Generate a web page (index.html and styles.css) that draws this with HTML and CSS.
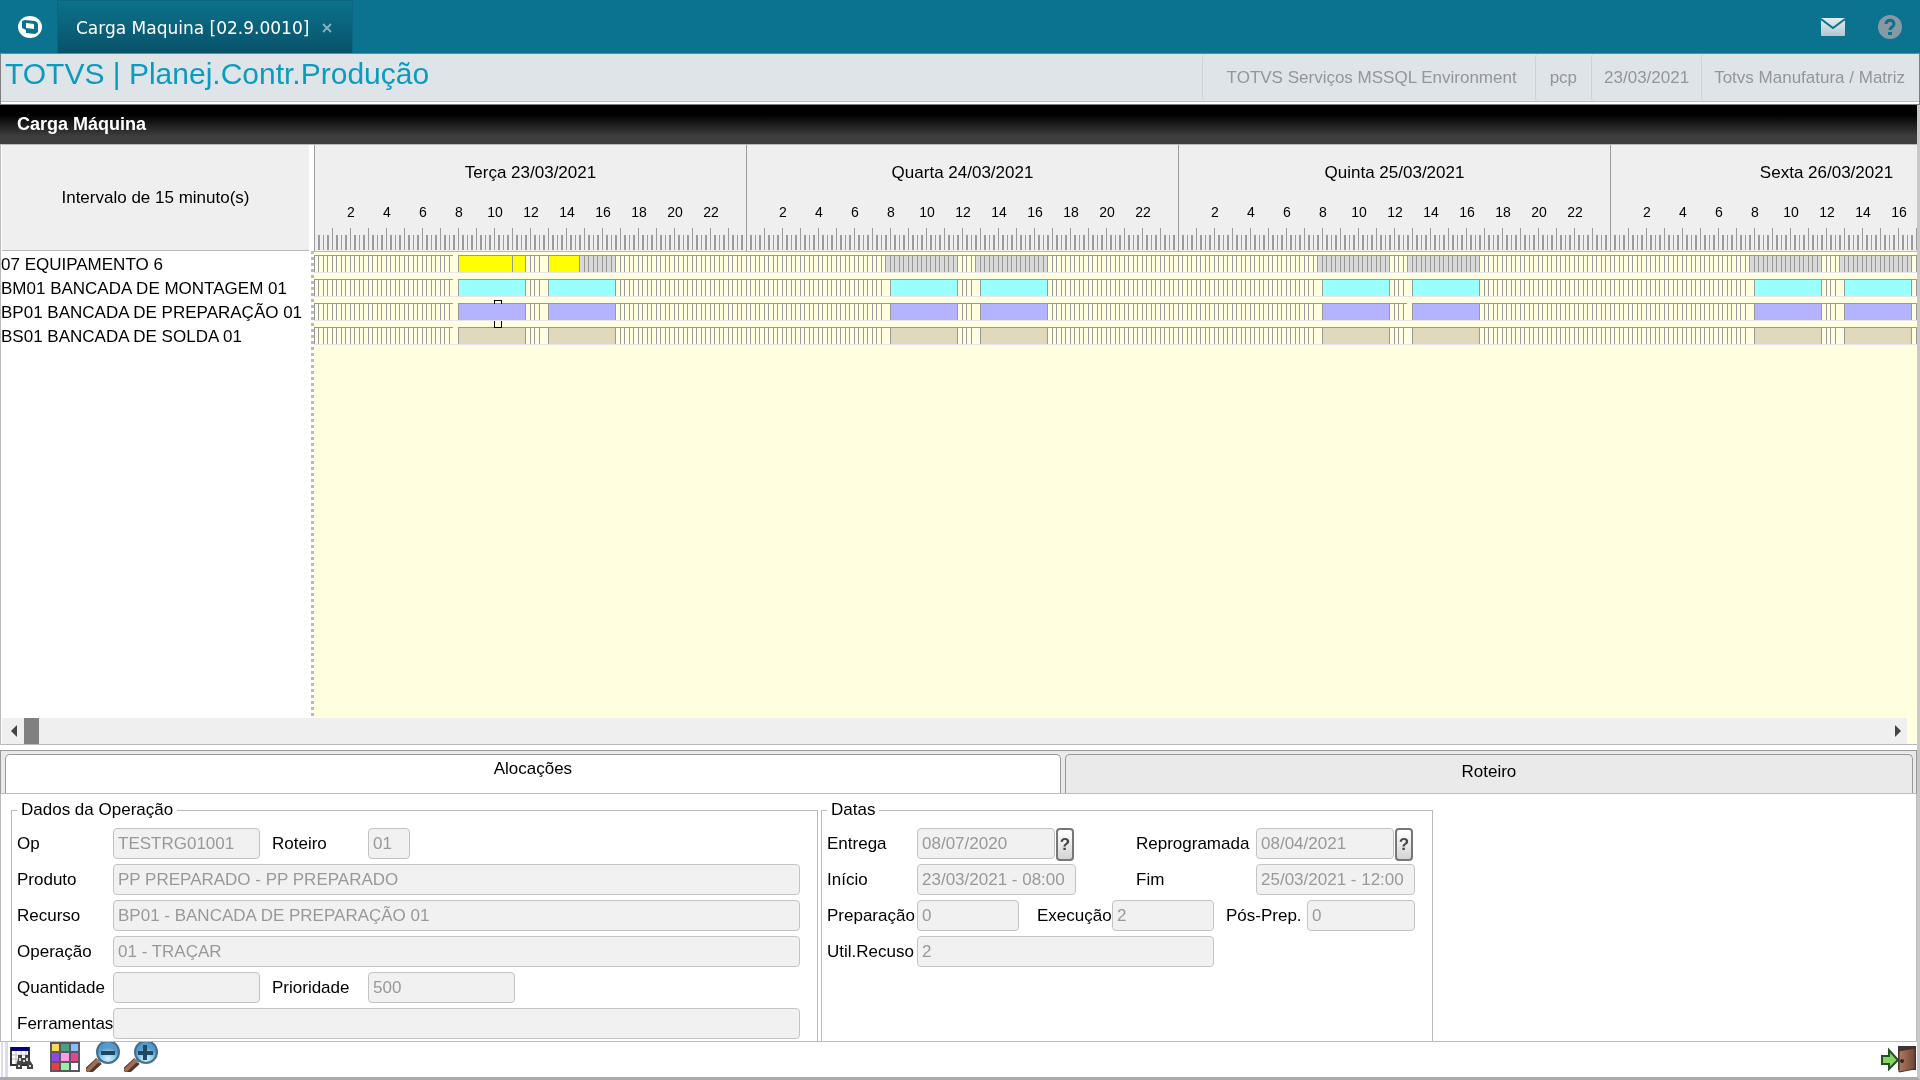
FILE: index.html
```html
<!DOCTYPE html>
<html lang="pt-BR">
<head>
  <meta charset="UTF-8" />
  <meta name="viewport" content="width=device-width, initial-scale=1" />
  <title>Carga Maquina</title>
  <link rel="stylesheet" href="styles.css">
</head>
<body>
  <!-- Barra superior -->
  <header class="topbar">
    <svg class="logo" viewBox="0 0 24 22" width="24" height="22">
      <ellipse cx="12" cy="11" rx="12" ry="11" fill="#fff"/>
      <path d="M4 5 L7 4 L17 5 Q20 6 20 9 L20 16 L17 18 L8 17 L8 14 L4 12 Z" fill="#0b728f"/>
      <path d="M8 7 L16 8 L16 13 L8 12 Z" fill="#fff"/>
    </svg>
    <div class="window-tab">
      <span>Carga Maquina [02.9.0010]</span>
      <button class="close" aria-label="Fechar">
        <svg viewBox="0 0 10 10" width="10" height="10"><path d="M1 1 L9 9 M9 1 L1 9" stroke="#7fb0bf" stroke-width="2"/></svg>
      </button>
    </div>
    <div class="top-icons">
      <button aria-label="Mensagens">
        <svg viewBox="0 0 24 18" width="24" height="18">
          <defs><linearGradient id="mail" x2="0" y2="1"><stop stop-color="#e4ecef"/><stop offset="1" stop-color="#b4c8d0"/></linearGradient></defs>
          <rect width="24" height="18" rx="1" fill="url(#mail)"/>
          <path d="M0 1 L12 10 L24 1" fill="none" stroke="#0b728f" stroke-width="2"/>
        </svg>
      </button>
      <button aria-label="Ajuda">
        <svg viewBox="0 0 24 24" width="24" height="24">
          <circle cx="12" cy="12" r="12" fill="#8799a5"/>
          <path d="M8 9 C8 4 16 4 16 9 C16 12 12 12 12 15" fill="none" stroke="#0b728f" stroke-width="3"/>
          <rect x="10" y="17" width="4" height="3" fill="#0b728f"/>
        </svg>
      </button>
    </div>
  </header>

  <div class="infobar">
    <h1>TOTVS | Planej.Contr.Produção</h1>
    <span class="info env">TOTVS Serviços MSSQL Environment</span>
    <span class="info user">pcp</span>
    <span class="info date">23/03/2021</span>
    <span class="info branch">Totvs Manufatura / Matriz</span>
  </div>

  <div class="window">
    <h2>Carga Máquina</h2>

    <!-- Gráfico de carga -->
    <section class="gantt">
      <div class="gantt-body">
        <div class="resources">
          <div class="interval">Intervalo de 15 minuto(s)</div>
          <ul id="resourceList"></ul>
        </div>
        <div class="timeline">
          <div class="scale" id="scale"></div>
          <div class="rows" id="rows"></div>
        </div>
      </div>
      <div class="scrollbar">
        <button aria-label="Anterior"><svg viewBox="0 0 6 12" width="6" height="12"><path d="M6 0 L0 6 L6 12 Z" fill="#444"/></svg></button>
        <div class="thumb"></div>
        <button class="next" aria-label="Próximo"><svg viewBox="0 0 6 12" width="6" height="12"><path d="M0 0 L6 6 L0 12 Z" fill="#444"/></svg></button>
      </div>
    </section>

    <!-- Abas -->
    <nav class="tabs">
      <button class="tab active">Alocações</button>
      <button class="tab">Roteiro</button>
    </nav>

    <form class="panel">
      <fieldset class="operation">
        <legend>Dados da Operação</legend>
        <div class="row">
          <label for="op">Op</label><input class="medium" id="op" value="TESTRG01001" disabled>
          <label class="second" for="roteiro">Roteiro</label><input class="tiny" id="roteiro" value="01" disabled>
        </div>
        <div class="row"><label for="produto">Produto</label><input class="full" id="produto" value="PP PREPARADO - PP PREPARADO" disabled></div>
        <div class="row"><label for="recurso">Recurso</label><input class="full" id="recurso" value="BP01 - BANCADA DE PREPARAÇÃO 01" disabled></div>
        <div class="row"><label for="operacao">Operação</label><input class="full" id="operacao" value="01 - TRAÇAR" disabled></div>
        <div class="row">
          <label for="quantidade">Quantidade</label><input class="medium" id="quantidade" disabled>
          <label class="second" for="prioridade">Prioridade</label><input class="medium" id="prioridade" value="500" disabled>
        </div>
        <div class="row"><label for="ferramentas">Ferramentas</label><input class="full" id="ferramentas" disabled></div>
      </fieldset>

      <fieldset class="dates">
        <legend>Datas</legend>
        <div class="row pair">
          <label for="entrega">Entrega</label>
          <div class="lookup"><input id="entrega" value="08/07/2020" disabled><button type="button">?</button></div>
          <label for="reprogramada">Reprogramada</label>
          <div class="lookup"><input id="reprogramada" value="08/04/2021" disabled><button type="button">?</button></div>
        </div>
        <div class="row pair">
          <label for="inicio">Início</label><input id="inicio" value="23/03/2021 - 08:00" disabled>
          <label for="fim">Fim</label><input id="fim" value="25/03/2021 - 12:00" disabled>
        </div>
        <div class="row triple">
          <label for="preparacao">Preparação</label><input id="preparacao" value="0" disabled>
          <label for="execucao">Execução</label><input id="execucao" value="2" disabled>
          <label for="posprep">Pós-Prep.</label><input id="posprep" value="0" disabled>
        </div>
        <div class="row single"><label for="util">Util.Recuso</label><input id="util" value="2" disabled></div>
      </fieldset>
    </form>

    <!-- Barra de ferramentas -->
    <footer class="toolbar">
      <button aria-label="Pesquisar">
        <svg viewBox="0 0 24 32" width="24" height="32">
          <rect x="2" y="6" width="18" height="17" fill="#fff" stroke="#333" stroke-width="2"/>
          <rect x="2" y="5" width="18" height="4" fill="#00007b"/>
          <path d="M7 9 V22 M12 9 V22 M17 9 V22 M3 13 H19 M3 17 H19" stroke="#bbb"/>
          <path d="M9 13 h4 v3 h3 v-3 h4 v4 l4 6 v4 h-6 v-5 h-5 v5 h-6 v-4 l2 -6 Z" fill="#444"/>
          <path d="M11 16 v3 M18 16 v3 M9 24 h2 M20 24 h2 M15 18 v2" stroke="#ddd" stroke-width="2"/>
        </svg>
      </button>
      <button class="palette" aria-label="Legenda de cores">
        <svg viewBox="0 0 30 32" width="30" height="32">
          <rect width="30" height="30" fill="#5c5562"/>
          <path d="M2 2h7v7H2z" fill="#f6db56"/><path d="M11 2h8v7h-8z" fill="#46a27f"/><path d="M21 2h7v7h-7z" fill="#83bfff"/>
          <path d="M2 11h7v8H2z" fill="#8f49df"/><path d="M11 11h8v8h-8z" fill="#ff9be0"/><path d="M21 11h7v8h-7z" fill="#e2478b"/>
          <path d="M2 21h7v7H2z" fill="#e44242"/><path d="M11 21h8v7h-8z" fill="#93f2a3"/><path d="M21 21h7v7h-7z" fill="#fff"/>
        </svg>
      </button>
      <button class="zoom" aria-label="Diminuir zoom">
        <svg viewBox="0 0 36 30" width="36" height="30">
          <defs><radialGradient id="lens" cy=".8"><stop stop-color="#d3f1ff"/><stop offset=".6" stop-color="#8fcbea"/><stop offset="1" stop-color="#5799c9"/></radialGradient></defs>
          <path d="M1 30 L13 19" stroke="#54362b" stroke-width="8"/>
          <path d="M1 29 L12 18" stroke="#a06c4f" stroke-width="4"/>
          <path d="M12 20 L16 16" stroke="#888" stroke-width="4"/>
          <circle cx="22" cy="10" r="11" fill="url(#lens)" stroke="#44708f" stroke-width="2"/>
          <path d="M15 11 H29" stroke="#1d4962" stroke-width="4"/>
        </svg>
      </button>
      <button class="zoom" aria-label="Aumentar zoom">
        <svg viewBox="0 0 36 30" width="36" height="30">
          <path d="M1 30 L13 19" stroke="#54362b" stroke-width="8"/>
          <path d="M1 29 L12 18" stroke="#a06c4f" stroke-width="4"/>
          <path d="M12 20 L16 16" stroke="#888" stroke-width="4"/>
          <circle cx="22" cy="10" r="11" fill="url(#lens)" stroke="#44708f" stroke-width="2"/>
          <path d="M14 11 H29 M21 3 V18" stroke="#1d4962" stroke-width="4"/>
        </svg>
      </button>
      <button class="exit" aria-label="Sair">
        <svg viewBox="0 0 36 30" width="36" height="30">
          <defs><linearGradient id="door"><stop stop-color="#ad7a62"/><stop offset="1" stop-color="#704636"/></linearGradient></defs>
          <path d="M17 2 H35 V26 H17 Z" fill="#3a3634"/>
          <path d="M18 7 L34 4 V25 L18 28 Z" fill="url(#door)" stroke="#4b3027"/>
          <path d="M1 12 H8 V6 L17 16 L8 25 V20 H1 Z" fill="#87d45c" stroke="#24502b" stroke-width="2"/>
          <circle cx="21" cy="17" r="2" fill="#3d241a"/>
        </svg>
      </button>
    </footer>
  </div>

  <script>
    const dias = [
      { nome: 'Terça 23/03/2021', ultimaHora: 22 },
      { nome: 'Quarta 24/03/2021', ultimaHora: 22 },
      { nome: 'Quinta 25/03/2021', ultimaHora: 22 },
      { nome: 'Sexta 26/03/2021', ultimaHora: 16 }
    ];

    // cada trecho: [hora inicial, hora final, tipo]
    const livre = [[7.75, 11.75, 'livre'], [12.75, 16.75, 'livre']];
    const turno = (tipo) => [[7.75, 8, 'vazio'], [8, 11.75, tipo], [12.75, 13, 'vazio'], [13, 16.75, tipo]];

    const recursos = [
      {
        nome: '07 EQUIPAMENTO 6',
        dias: [
          [[7.75, 8, 'vazio'], [8, 11, 'amarelo'], [11, 11.75, 'amarelo'], [12.75, 13, 'vazio'], [13, 14.75, 'amarelo'], [14.75, 16.75, 'livre']],
          livre, livre, livre
        ]
      },
      { nome: 'BM01 BANCADA DE MONTAGEM 01', tipo: 'ciano' },
      { nome: 'BP01 BANCADA DE PREPARAÇÃO 01', tipo: 'lilas', marcado: true },
      { nome: 'BS01 BANCADA DE SOLDA 01', tipo: 'bege' }
    ];

    const px = (hora) => Math.floor(hora * 18);

    function novo(classe, pai, texto) {
      const el = document.createElement('div');
      el.className = classe;
      if (texto) el.textContent = texto;
      pai.appendChild(el);
      return el;
    }

    const scale = document.getElementById('scale');
    dias.forEach((dia) => {
      const d = novo('scale-day', scale);
      novo('day-name', d, dia.nome);
      const horas = novo('hours', d);
      for (let h = 2; h <= dia.ultimaHora; h += 2) {
        novo('hour', horas, String(h));
      }
      novo('ticks', d);
    });

    const lista = document.getElementById('resourceList');
    const rows = document.getElementById('rows');
    recursos.forEach((r) => {
      const li = document.createElement('li');
      li.textContent = r.nome;
      lista.appendChild(li);

      const linha = novo('load', rows);
      dias.forEach((dia, i) => {
        const trechos = r.dias ? r.dias[i] : turno(r.tipo);
        const d = novo('load-day', linha);
        let fim = 0;
        trechos.forEach(([de, ate, tipo]) => {
          // interrompe também a borda da linha
          const corte = tipo === 'vazio' && ((i === 0 && de < 8) || (r.marcado && i === 2 && de > 12));
          const s = novo('seg ' + (corte ? 'corte' : tipo), d);
          s.style.marginLeft = px(de) - fim + 'px';
          s.style.width = px(ate) - px(de) + 'px';
          fim = px(ate);
        });
      });
      if (r.marcado) novo('marker', linha);
    });
  </script>
</body>
</html>
```
FILE: styles.css
```css
* {
  box-sizing: border-box;
}
body {
  margin: 0;
  height: 100vh;
  display: flex;
  flex-direction: column;
  overflow: hidden;
  background: #fff;
  color: #000;
  font-family: "Liberation Sans", Arial, sans-serif;
  font-size: 17px;
  line-height: 20px;
}
h1, h2, ul {
  margin: 0;
  padding: 0;
}
button {
  padding: 0;
  border: none;
  background: none;
  font: inherit;
  color: inherit;
}
svg {
  display: block;
}

/* Barra superior */
.topbar {
  flex: none;
  height: 53px;
  display: flex;
  align-items: center;
  padding: 0 18px;
  background: #0b728f;
}
.window-tab {
  height: 53px;
  display: flex;
  align-items: center;
  gap: 13px;
  margin-left: 15px;
  padding: 2px 20px 0 18px;
  border: 1px solid #0a677f;
  border-bottom: none;
  background: linear-gradient(#0b728b, #08526a);
  color: #fff;
  font-family: "DejaVu Sans", Verdana, sans-serif;
}
.top-icons {
  display: flex;
  align-items: center;
  gap: 33px;
  margin-left: auto;
}
.infobar {
  flex: none;
  height: 52px;
  display: flex;
  border: 1px solid #7f7f7f;
  background: linear-gradient(#dfe4e8 47px, #bbb 47px, #bbb 48px, #fff 48px);
}
.infobar h1 {
  flex: 1;
  padding-left: 4px;
  color: #0c9abe;
  font-size: 30px;
  font-weight: normal;
  line-height: 40px;
}
.info {
  height: 47px;
  padding: 0 12px;
  border-left: 1px solid #cdd2d5;
  border-radius: 4px;
  color: #93969a;
  line-height: 47px;
  white-space: nowrap;
}
.env {
  padding: 0 18px 0 24px;
}
.user {
  padding: 0 14px;
}
.branch {
  padding-right: 14px;
}

/* Janela */
.window {
  flex: 1;
  min-height: 0;
  display: flex;
  flex-direction: column;
  border-right: 3px solid #c8c8c8;
  border-bottom: 3px solid #aaa;
}
.window h2 {
  flex: none;
  height: 39px;
  padding-left: 17px;
  background: linear-gradient(#000 25%, #3e3e3e 80%);
  color: #fff;
  font-size: 18px;
  line-height: 38px;
}
.gantt {
  flex: 1;
  min-height: 0;
  display: flex;
  flex-direction: column;
  border: 1px solid #bbb;
  border-right: none;
}
.gantt-body {
  flex: 1;
  min-height: 0;
  display: flex;
}
.resources {
  flex: none;
  width: 313px;
  display: flex;
  flex-direction: column;
}
.interval {
  height: 106px;
  margin: 0 5px 0 1px;
  border-bottom: 1px solid #bbb;
  background: #efefef;
  line-height: 106px;
  text-align: center;
}
.resources ul {
  flex: 1;
  padding-top: 2px;
  list-style: none;
  line-height: 24px;
  white-space: nowrap;
  background: repeating-linear-gradient(#bbb 0 3px, #fff 3px 6px) right / 3px 100% no-repeat;
}
.timeline {
  flex: 1;
  min-width: 0;
  overflow: hidden;
  background: #ffffe0;
}
.scale {
  height: 107px;
  display: flex;
  border-bottom: 1px solid #bbb;
  background: #efefef;
}
.scale-day {
  flex: none;
  width: 432px;
  border-left: 1px solid #9b9b9b;
  text-align: center;
}
.day-name {
  padding-top: 18px;
}
.hours {
  display: flex;
  margin-top: 19px;
  padding-left: 18px;
  font-size: 14px;
}
.hour {
  width: 36px;
}
.ticks {
  height: 22px;
  margin: 6px 0 0 -1px;
  background:
    repeating-linear-gradient(90deg, #9b9b9b 0 1px, transparent 1px 18px),
    repeating-linear-gradient(90deg, transparent 0 4px, #9b9b9b 4px 6px, transparent 6px 9px, #9b9b9b 9px 10px, transparent 10px 13px, #9b9b9b 13px 15px, transparent 15px 18px) 0 7px no-repeat;
}
.rows {
  display: flex;
  flex-direction: column;
  gap: 6px;
  padding-top: 3px;
}
.load {
  position: relative;
  width: 1728px;
  height: 18px;
  display: flex;
  border-top: 1px solid #999;
  border-bottom: 1px solid #e6e6ea;
  background: repeating-linear-gradient(90deg, #999 0 1px, #ffffe0 1px 4px, #999 4px 5px, #ffffe0 5px 9px, #999 9px 10px, #ffffe0 10px 13px, #999 13px 14px, #ffffe0 14px 18px);
}
.load-day {
  flex: none;
  width: 432px;
  display: flex;
}
.seg {
  flex: none;
  border-left: 1px solid #999;
}
.amarelo { background: #ff0; }
.ciano { background: #9ff; }
.lilas { background: #b3b3ff; }
.bege { background: #e0d9bb; }
.livre {
  background: #d9d9d9;
  mix-blend-mode: darken;
}
.vazio {
  border: none;
  background: #ffffe0;
}
.corte {
  margin-top: -1px;
  border: none;
  background: #ffffe0;
}
/* alças do item selecionado */
.marker::before, .marker::after {
  content: "";
  position: absolute;
  z-index: 1;
  left: 180px;
  width: 6px;
  border: 1px solid #000;
}
.marker::before {
  top: -4px;
  height: 3px;
  border-bottom: none;
}
.marker::after {
  top: 17px;
  height: 6px;
  border-top: none;
}
.scrollbar {
  flex: none;
  height: 26px;
  display: flex;
  align-items: center;
  margin-left: 1px;
  padding: 0 6px 0 9px;
  border-right: 10px solid #ffffe0;
  background: #efefef;
}
.thumb {
  width: 15px;
  height: 26px;
  margin-left: 7px;
  background: #808080;
}
.next {
  margin-left: auto;
}

/* Abas */
.tabs {
  flex: none;
  height: 44px;
  display: flex;
  gap: 4px;
  margin-top: 5px;
  padding: 3px 3px 0 4px;
  border: 1px solid #999;
  border-bottom-color: #bbb;
  background: #eaeaea;
}
.tab {
  flex: 848;
  padding-bottom: 4px;
  border: 1px solid #999;
  border-bottom: none;
  border-radius: 5px 5px 0 0;
}
.tab.active {
  flex: 1056;
  padding-bottom: 11px;
  background: #fff;
}

/* Formulário */
.panel {
  flex: none;
  height: 248px;
  display: flex;
  gap: 3px;
  overflow: hidden;
  padding: 6px 0 0 10px;
  border: 1px solid #bbb;
  border-top: none;
}
fieldset {
  min-width: 0;
  height: 250px;
  margin: 0;
  padding: 3px 5px;
  border: 1px solid #bbb;
}
legend {
  padding: 0 4px;
}
.operation {
  width: 807px;
}
.dates {
  width: 612px;
}
.row {
  display: flex;
  align-items: center;
  margin-top: 5px;
}
.operation label {
  flex: none;
  width: 96px;
}
.operation .second {
  margin-left: 12px;
}
input {
  width: 100%;
  height: 31px;
  padding: 0 4px;
  border: 1px solid #c4c4c4;
  border-radius: 4px;
  background: #f1f1f1;
  color: #999;
  font: inherit;
}
.medium {
  width: 147px;
}
.tiny {
  width: 42px;
}
.full {
  flex: 1;
  margin-right: 12px;
}
.pair {
  display: grid;
  grid-template-columns: 90px 159px 60px 120px 159px;
}
.pair label:nth-child(3) {
  grid-column: 4;
}
.lookup {
  height: 31px;
  display: flex;
  gap: 1px;
}
.lookup input {
  width: 138px;
}
.lookup button {
  width: 18px;
  height: 33px;
  border: 2px solid #777;
  border-radius: 4px;
  background: linear-gradient(#fff, #d4d4d4);
  color: #444;
  font-weight: bold;
}
.triple {
  display: grid;
  grid-template-columns: 90px 120px 75px 114px 81px 108px;
}
.triple input {
  width: 102px;
}
.triple input:last-child {
  width: 108px;
}
.single {
  display: grid;
  grid-template-columns: 90px 297px;
}

/* Barra de ferramentas */
.toolbar {
  flex: none;
  height: 35px;
  display: flex;
  align-items: flex-start;
  padding-left: 9px;
  background: linear-gradient(90deg, #fff 1px, #dcdcee 1px 3px, #fff 3px 5px, #dcdcee 5px 8px, #fff 8px);
}
.palette {
  margin-left: 17px;
}
.zoom {
  margin-left: 6px;
}
.zoom + .zoom {
  margin-left: 2px;
}
.exit {
  margin: 2px 0 0 auto;
}
```
